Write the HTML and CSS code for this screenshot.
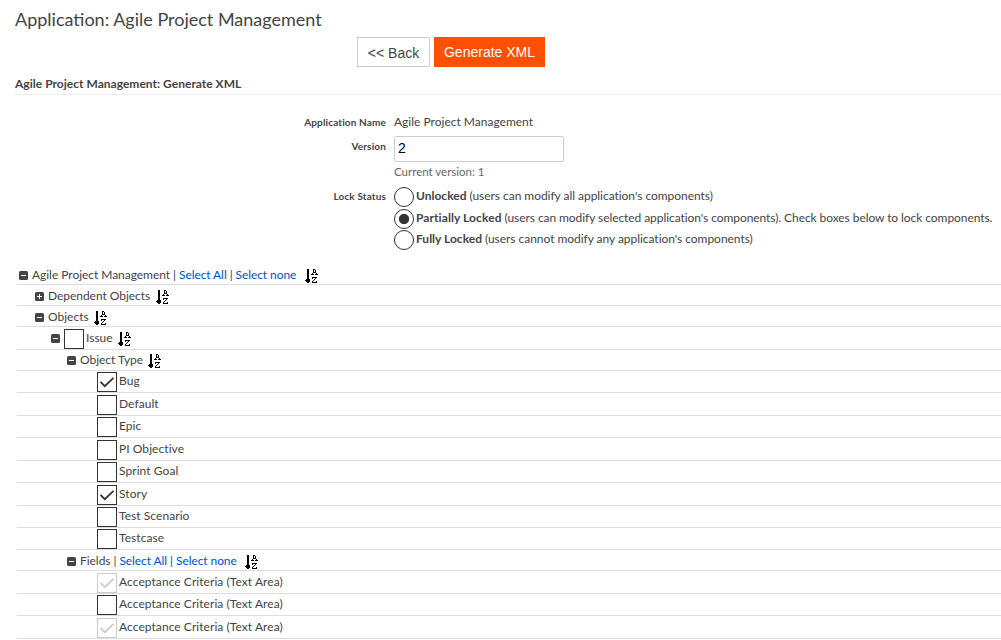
FILE: index.html
```html
<!DOCTYPE html>
<html lang="en">
<head>
<meta charset="utf-8">
<title>Application: Agile Project Management</title>
<link rel="stylesheet" href="styles.css">
</head>
<body>
<svg class="defs" width="0" height="0">
  <symbol id="sort" viewBox="0 0 13 15"><path d="M2 0h2v11h-2zM1 10h4v1h-4zM0 11h5v1h-5zM1 12h4v1h-4zM2 13h2v1h-2zM8 0h2v1h-2zM8 1h1v2h-1zM10 1h1v2h-1zM8 3h3v1h-3zM7 4h1v1h-1zM11 4h1v1h-1zM6 5h3v1h-3zM10 5h3v1h-3zM7 8h5v1h-5zM7 9h1v1h-1zM10 9h1v1h-1zM9 10h1v1h-1zM8 11h1v1h-1zM7 12h1v1h-1zM11 12h1v1h-1zM7 13h5v1h-5z"/></symbol>
  <symbol id="minus" viewBox="0 0 9 9"><rect width="9" height="9" rx="1.5" fill="#444"/><path d="M2 4h5v1h-5z" fill="#fff"/></symbol>
  <symbol id="plus" viewBox="0 0 9 9"><rect width="9" height="9" rx="1.5" fill="#444"/><path d="M2 4h5v1h-5zM4 2h1v5h-1z" fill="#fff"/></symbol>
  <symbol id="check" viewBox="0 0 18 18"><path d="M2.5 8.8l4.3 4.4 8.7-8.4" fill="none" stroke="currentColor" stroke-width="1.8"/></symbol>
</svg>
<h1 class="title">Application: Agile Project Management</h1>
<div class="actions"><button class="btn">&lt;&lt; Back</button><button class="btn primary">Generate XML</button></div>
<h2 class="section">Agile Project Management: Generate XML</h2>
<div class="form">
  <div class="label app">Application Name</div><div class="value name">Agile Project Management</div>
  <div class="label">Version</div><div class="value version"><input class="input" value="2"><div class="hint">Current version: 1</div></div>
  <div class="label">Lock Status</div>
  <div class="value options">
    <label class="option first"><span class="radio"></span><span><b>Unlocked</b> <span class="note">(users can modify all application's components)</span></span></label>
    <label class="option"><span class="radio on"></span><span><b class="wide-name">Partially Locked</b> <span class="note long">(users can modify selected application's components). Check boxes below to lock components.</span></span></label>
    <label class="option last"><span class="radio"></span><span><b>Fully Locked</b> <span class="note">(users cannot modify any application's components)</span></span></label>
  </div>
</div>
<div class="tree">
  <div class="row l0"><svg class="tog"><use href="#minus"/></svg><span><span class="tight">Agile Project Management</span><span class="links"> | <a>Select All</a> | <a>Select none</a></span></span><svg class="sort root"><use href="#sort"/></svg></div>
  <div class="row l1"><svg class="tog"><use href="#plus"/></svg><span class="tight">Dependent Objects</span><svg class="sort far"><use href="#sort"/></svg></div>
  <div class="row l1"><svg class="tog"><use href="#minus"/></svg><span>Objects</span><svg class="sort"><use href="#sort"/></svg></div>
  <div class="row l2 item tall"><svg class="tog"><use href="#minus"/></svg><span class="box"></span><span>Issue</span><svg class="sort"><use href="#sort"/></svg></div>
  <div class="row l3 type"><svg class="tog"><use href="#minus"/></svg><span class="tight">Object Type</span><svg class="sort"><use href="#sort"/></svg></div>
  <div class="row l4 item"><span class="box"><svg><use href="#check"/></svg></span><span>Bug</span></div>
  <div class="row l4 item tall"><span class="box"></span><span>Default</span></div>
  <div class="row l4 item"><span class="box"></span><span>Epic</span></div>
  <div class="row l4 item tall"><span class="box"></span><span>PI Objective</span></div>
  <div class="row l4 item"><span class="box"></span><span>Sprint Goal</span></div>
  <div class="row l4 item tall"><span class="box"><svg><use href="#check"/></svg></span><span>Story</span></div>
  <div class="row l4 item"><span class="box"></span><span>Test Scenario</span></div>
  <div class="row l4 item"><span class="box"></span><span>Testcase</span></div>
  <div class="row l3 fields"><svg class="tog"><use href="#minus"/></svg><span><span class="tight">Fields</span><span class="links"> | <a>Select All</a> | <a>Select none</a></span></span><svg class="sort wide"><use href="#sort"/></svg></div>
  <div class="row l4 item tall"><span class="box off"><svg><use href="#check"/></svg></span><span>Acceptance Criteria (Text Area)</span></div>
  <div class="row l4 item"><span class="box"></span><span>Acceptance Criteria (Text Area)</span></div>
  <div class="row l4 item tall"><span class="box off"><svg><use href="#check"/></svg></span><span>Acceptance Criteria (Text Area)</span></div>
</div>
</body>
</html>
```
FILE: styles.css
```css
* { box-sizing: border-box; }
body { margin: 0; height: 640px; overflow: hidden; background: #fff; color: #444; font: 12px/16px Lato, sans-serif; white-space: nowrap; }
.defs { display: block; height: 0; }
.title { margin: 0; padding: 7px 0 0 15px; height: 37px; font-size: 18px; line-height: 24px; font-weight: 400; }
.actions { display: flex; gap: 4px; padding-left: 357px; height: 38px; }
.btn { width: 73px; height: 30px; padding: 2px 0 0; border: 1px solid #ccc; background: #fff; color: #444; font: 14px/24px "Liberation Sans", sans-serif; }
.primary { width: 111px; padding: 0; border-color: #ff4f00; background: #ff4f00; color: #fff; }
.section { margin: 0 0 0 15px; height: 20px; border-bottom: 1px solid #eee; font-size: 12px; line-height: 18px; font-weight: 700; letter-spacing: 0.02px; }
.form { display: grid; grid-template-columns: 386px 1fr; grid-template-rows: 23px 50px 70px; column-gap: 8px; padding-top: 19px; height: 169px; }
.label { text-align: right; font-size: 10px; font-weight: 700; line-height: 18px; letter-spacing: 0.14px; }
.app { line-height: 16px; }
.input { display: block; width: 170px; height: 26px; padding: 0 3px 2px; border: 1px solid #ccc; border-radius: 2px; font: 14px "Liberation Sans", sans-serif; color: #000; }
.version { margin-top: -1px; }
.hint { padding-top: 2px; color: #666; font-size: 11.5px; }
.option { display: flex; gap: 2px; height: 21px; line-height: 18px; }
.option.first { height: 22px; }
.note { letter-spacing: -0.04px; }
.long { letter-spacing: -0.07px; }
.wide-name { letter-spacing: 0.08px; }
.radio { width: 20px; height: 20px; border: 1px solid #333; border-radius: 50%; }
.on { background: radial-gradient(circle, #333 4.7px, #fff 5.5px); }
.tree { margin-left: 17px; }
.row { display: flex; align-items: flex-end; height: 21px; border-bottom: 1px solid #ddd; }
.row > span:not(.box) { padding-bottom: 1px; }
.row.item { height: 22px; }
.row.tall { height: 23px; }
.row.item > span:not(.box) { padding-bottom: 3px; }
.row.type > span:not(.box) { padding-bottom: 2px; }
.l0 { padding-left: 2px; }
.l1 { padding-left: 18px; }
.l2 { padding-left: 34px; }
.l3 { padding-left: 50px; }
.l4 { padding-left: 80px; letter-spacing: 0.06px; }
.tog { width: 9px; height: 9px; margin: 0 4px 4px 0; }
.item .tog { margin-bottom: 6px; }
.sort { width: 13px; height: 15px; margin-left: 5px; shape-rendering: crispEdges; }
.sort.far { margin-left: 6px; }
.sort.wide { margin-left: 8px; }
.sort.root { margin-left: 9px; }
.item .sort { margin-bottom: 2px; }
.type .tog { margin-bottom: 5px; }
.type .sort { margin-bottom: 1px; }
.tight { letter-spacing: -0.04px; }
.links { letter-spacing: -0.08px; }
.box { display: block; width: 20px; height: 20px; margin-right: 2px; border: 1px solid #333; color: #333; }
.box svg { display: block; width: 18px; height: 18px; }
.off { border-color: #ccc; color: #ccc; }
a { color: #0052cc; }
```
